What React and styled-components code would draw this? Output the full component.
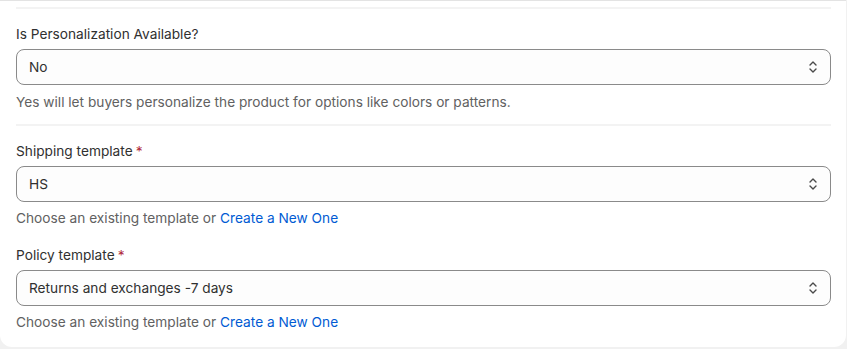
import React from 'react';
import styled, { createGlobalStyle } from 'styled-components';

const GlobalStyle = createGlobalStyle`
  body {
    margin: 0;
    background: #f1f1f1;
    font-family: Inter, "Noto Sans", sans-serif;
    -webkit-font-smoothing: antialiased;
  }
`;

const Card = styled.div`
  width: 846px;
  height: 347px;
  box-sizing: border-box;
  background: #fff;
  border-top: 1px solid #e3e3e3;
  border-radius: 0 0 12px 12px;
  padding: 6px 15px 0 16px;
  display: flex;
  flex-direction: column;
`;

const Divider = styled.div`
  height: 2px;
  background: #f3f3f3;
  margin: ${p => p.$top || 0}px 0 0;
`;

const Field = styled.div`
  display: flex;
  flex-direction: column;
  margin-top: ${p => p.$top}px;
`;

const Label = styled.div`
  font-size: 13.7px;
  line-height: 20px;
  color: #303030;
  margin-bottom: 5px;
`;

const Required = styled.span`
  color: #b02a3c;
  margin-left: 3px;
`;

const SelectBox = styled.div`
  height: 36px;
  box-sizing: border-box;
  border: 1px solid #8a8a8a;
  border-radius: 8px;
  background: #fdfdfd;
  display: flex;
  align-items: center;
  justify-content: space-between;
  padding: 0 11px 0 12px;
  font-size: 13.7px;
  color: #303030;
`;

const Help = styled.div`
  font-size: 13.7px;
  line-height: 20px;
  color: #616161;
  margin-top: ${p => p.$top || 6}px;
`;

const Link = styled.a`
  color: #005bd3;
  text-decoration: none;
  cursor: pointer;
`;

const Chevrons = () => (
  <svg width="12" height="14" viewBox="0 0 12 14" fill="none" stroke="#4a4a4a" strokeWidth="1.4" strokeLinecap="round" strokeLinejoin="round">
    <path d="M3 5l3-3 3 3" />
    <path d="M3 9l3 3 3-3" />
  </svg>
);

const Select = ({ value }) => (
  <SelectBox>
    <span>{value}</span>
    <Chevrons />
  </SelectBox>
);

export default function App() {
  return (
    <>
      <GlobalStyle />
      <Card>
        <Divider />
        <Field $top={15}>
          <Label>Is Personalization Available?</Label>
          <Select value="No" />
          <Help $top={7}>Yes will let buyers personalize the product for options like colors or patterns.</Help>
        </Field>
        <Divider $top={12} />
        <Field $top={15}>
          <Label>Shipping template<Required>*</Required></Label>
          <Select value="HS" />
          <Help>Choose an existing template or <Link>Create a New One</Link></Help>
        </Field>
        <Field $top={17}>
          <Label>Policy template<Required>*</Required></Label>
          <Select value="Returns and exchanges -7 days" />
          <Help>Choose an existing template or <Link>Create a New One</Link></Help>
        </Field>
      </Card>
    </>
  );
}
